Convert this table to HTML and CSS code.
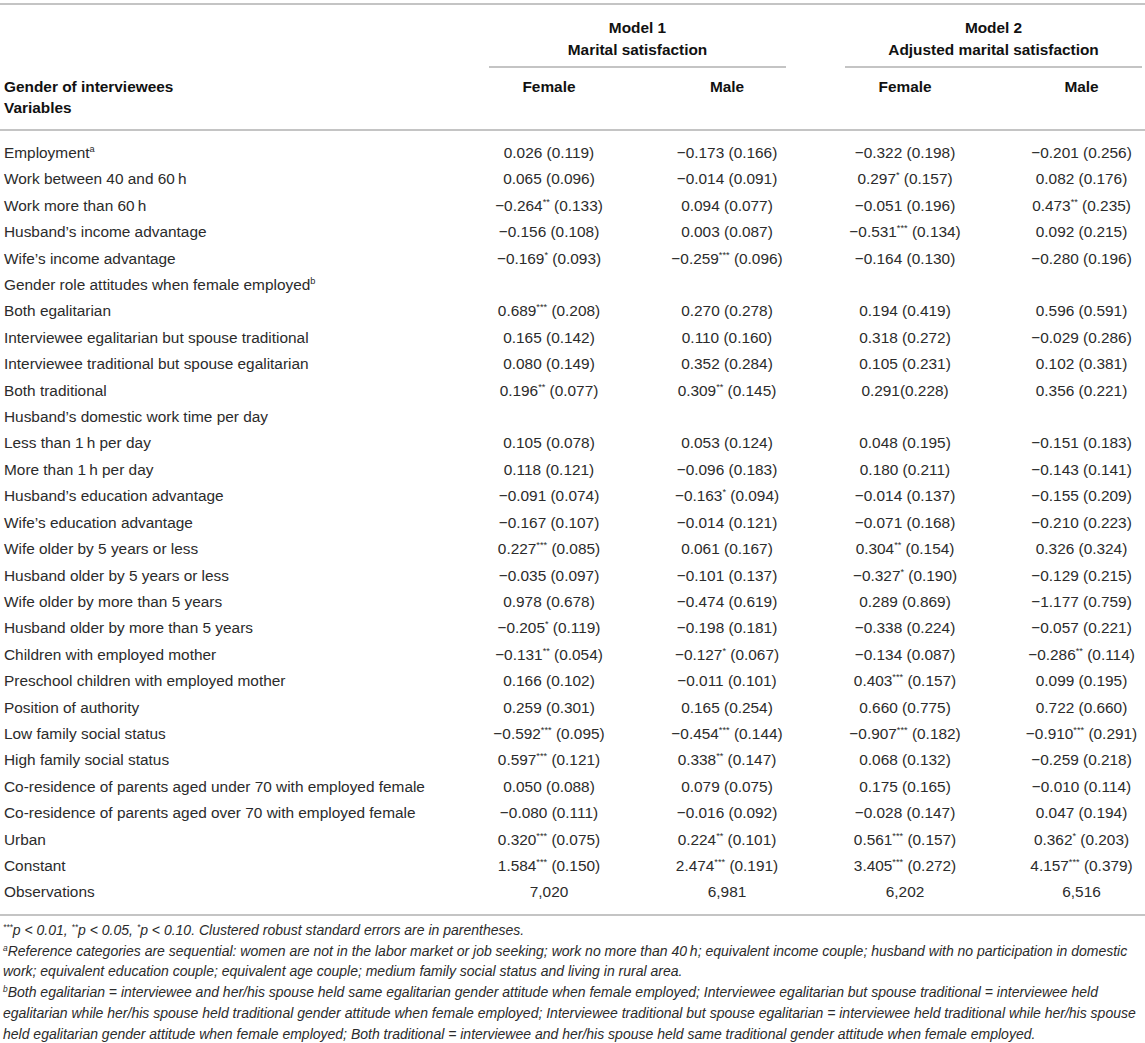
FILE: index.html
```html
<!DOCTYPE html>
<html lang="en">
  <head>
    <meta charset="UTF-8" />
    <meta name="viewport" content="width=device-width, initial-scale=1.0" />
    <title>Marital satisfaction models</title>
    <link rel="stylesheet" href="styles.css">
  </head>
  <body>
    <table class="results">
      <colgroup>
        <col class="col-label" />
        <col class="col-num" />
        <col class="col-num" />
        <col class="col-num" />
        <col class="col-last" />
      </colgroup>
      <thead>
        <tr class="head-models">
          <th></th>
          <th colspan="2"><div class="model model-1">Model 1<br />Marital satisfaction</div></th>
          <th colspan="2"><div class="model model-2">Model 2<br />Adjusted marital satisfaction</div></th>
        </tr>
        <tr class="head-gender">
          <th class="label">Gender of interviewees<br />Variables</th>
          <th>Female</th>
          <th>Male</th>
          <th>Female</th>
          <th class="last">Male</th>
        </tr>
      </thead>
      <tbody>
        <tr><td class="label">Employment<sup>a</sup></td><td>0.026 (0.119)</td><td>&minus;0.173 (0.166)</td><td>&minus;0.322 (0.198)</td><td class="last">&minus;0.201 (0.256)</td></tr>
        <tr><td class="label">Work between 40 and 60&#8201;h</td><td>0.065 (0.096)</td><td>&minus;0.014 (0.091)</td><td>0.297<sup>*</sup> (0.157)</td><td class="last">0.082 (0.176)</td></tr>
        <tr><td class="label">Work more than 60&#8201;h</td><td>&minus;0.264<sup>**</sup> (0.133)</td><td>0.094 (0.077)</td><td>&minus;0.051 (0.196)</td><td class="last">0.473<sup>**</sup> (0.235)</td></tr>
        <tr><td class="label">Husband&rsquo;s income advantage</td><td>&minus;0.156 (0.108)</td><td>0.003 (0.087)</td><td>&minus;0.531<sup>***</sup> (0.134)</td><td class="last">0.092 (0.215)</td></tr>
        <tr><td class="label">Wife&rsquo;s income advantage</td><td>&minus;0.169<sup>*</sup> (0.093)</td><td>&minus;0.259<sup>***</sup> (0.096)</td><td>&minus;0.164 (0.130)</td><td class="last">&minus;0.280 (0.196)</td></tr>
        <tr><td class="label">Gender role attitudes when female employed<sup>b</sup></td><td></td><td></td><td></td><td class="last"></td></tr>
        <tr><td class="label">Both egalitarian</td><td>0.689<sup>***</sup> (0.208)</td><td>0.270 (0.278)</td><td>0.194 (0.419)</td><td class="last">0.596 (0.591)</td></tr>
        <tr><td class="label">Interviewee egalitarian but spouse traditional</td><td>0.165 (0.142)</td><td>0.110 (0.160)</td><td>0.318 (0.272)</td><td class="last">&minus;0.029 (0.286)</td></tr>
        <tr><td class="label">Interviewee traditional but spouse egalitarian</td><td>0.080 (0.149)</td><td>0.352 (0.284)</td><td>0.105 (0.231)</td><td class="last">0.102 (0.381)</td></tr>
        <tr><td class="label">Both traditional</td><td>0.196<sup>**</sup> (0.077)</td><td>0.309<sup>**</sup> (0.145)</td><td>0.291(0.228)</td><td class="last">0.356 (0.221)</td></tr>
        <tr><td class="label">Husband&rsquo;s domestic work time per day</td><td></td><td></td><td></td><td class="last"></td></tr>
        <tr><td class="label">Less than 1&#8201;h per day</td><td>0.105 (0.078)</td><td>0.053 (0.124)</td><td>0.048 (0.195)</td><td class="last">&minus;0.151 (0.183)</td></tr>
        <tr><td class="label">More than 1&#8201;h per day</td><td>0.118 (0.121)</td><td>&minus;0.096 (0.183)</td><td>0.180 (0.211)</td><td class="last">&minus;0.143 (0.141)</td></tr>
        <tr><td class="label">Husband&rsquo;s education advantage</td><td>&minus;0.091 (0.074)</td><td>&minus;0.163<sup>*</sup> (0.094)</td><td>&minus;0.014 (0.137)</td><td class="last">&minus;0.155 (0.209)</td></tr>
        <tr><td class="label">Wife&rsquo;s education advantage</td><td>&minus;0.167 (0.107)</td><td>&minus;0.014 (0.121)</td><td>&minus;0.071 (0.168)</td><td class="last">&minus;0.210 (0.223)</td></tr>
        <tr><td class="label">Wife older by 5 years or less</td><td>0.227<sup>***</sup> (0.085)</td><td>0.061 (0.167)</td><td>0.304<sup>**</sup> (0.154)</td><td class="last">0.326 (0.324)</td></tr>
        <tr><td class="label">Husband older by 5 years or less</td><td>&minus;0.035 (0.097)</td><td>&minus;0.101 (0.137)</td><td>&minus;0.327<sup>*</sup> (0.190)</td><td class="last">&minus;0.129 (0.215)</td></tr>
        <tr><td class="label">Wife older by more than 5 years</td><td>0.978 (0.678)</td><td>&minus;0.474 (0.619)</td><td>0.289 (0.869)</td><td class="last">&minus;1.177 (0.759)</td></tr>
        <tr><td class="label">Husband older by more than 5 years</td><td>&minus;0.205<sup>*</sup> (0.119)</td><td>&minus;0.198 (0.181)</td><td>&minus;0.338 (0.224)</td><td class="last">&minus;0.057 (0.221)</td></tr>
        <tr><td class="label">Children with employed mother</td><td>&minus;0.131<sup>**</sup> (0.054)</td><td>&minus;0.127<sup>*</sup> (0.067)</td><td>&minus;0.134 (0.087)</td><td class="last">&minus;0.286<sup>**</sup> (0.114)</td></tr>
        <tr><td class="label">Preschool children with employed mother</td><td>0.166 (0.102)</td><td>&minus;0.011 (0.101)</td><td>0.403<sup>***</sup> (0.157)</td><td class="last">0.099 (0.195)</td></tr>
        <tr><td class="label">Position of authority</td><td>0.259 (0.301)</td><td>0.165 (0.254)</td><td>0.660 (0.775)</td><td class="last">0.722 (0.660)</td></tr>
        <tr><td class="label">Low family social status</td><td>&minus;0.592<sup>***</sup> (0.095)</td><td>&minus;0.454<sup>***</sup> (0.144)</td><td>&minus;0.907<sup>***</sup> (0.182)</td><td class="last">&minus;0.910<sup>***</sup> (0.291)</td></tr>
        <tr><td class="label">High family social status</td><td>0.597<sup>***</sup> (0.121)</td><td>0.338<sup>**</sup> (0.147)</td><td>0.068 (0.132)</td><td class="last">&minus;0.259 (0.218)</td></tr>
        <tr><td class="label">Co-residence of parents aged under 70 with employed female</td><td>0.050 (0.088)</td><td>0.079 (0.075)</td><td>0.175 (0.165)</td><td class="last">&minus;0.010 (0.114)</td></tr>
        <tr><td class="label">Co-residence of parents aged over 70 with employed female</td><td>&minus;0.080 (0.111)</td><td>&minus;0.016 (0.092)</td><td>&minus;0.028 (0.147)</td><td class="last">0.047 (0.194)</td></tr>
        <tr><td class="label">Urban</td><td>0.320<sup>***</sup> (0.075)</td><td>0.224<sup>**</sup> (0.101)</td><td>0.561<sup>***</sup> (0.157)</td><td class="last">0.362<sup>*</sup> (0.203)</td></tr>
        <tr><td class="label">Constant</td><td>1.584<sup>***</sup> (0.150)</td><td>2.474<sup>***</sup> (0.191)</td><td>3.405<sup>***</sup> (0.272)</td><td class="last">4.157<sup>***</sup> (0.379)</td></tr>
        <tr><td class="label">Observations</td><td>7,020</td><td>6,981</td><td>6,202</td><td class="last">6,516</td></tr>
      </tbody>
    </table>

    <div class="notes">
      <p><sup>***</sup>p &lt; 0.01, <sup>**</sup>p &lt; 0.05, <sup>*</sup>p &lt; 0.10. Clustered robust standard errors are in parentheses.</p>
      <p><sup>a</sup>Reference categories are sequential: women are not in the labor market or job seeking; work no more than 40&#8201;h; equivalent income couple; husband with no participation in domestic work; equivalent education couple; equivalent age couple; medium family social status and living in rural area.</p>
      <p><sup>b</sup>Both egalitarian = interviewee and her/his spouse held same egalitarian gender attitude when female employed; Interviewee egalitarian but spouse traditional = interviewee held egalitarian while her/his spouse held traditional gender attitude when female employed; Interviewee traditional but spouse egalitarian = interviewee held traditional while her/his spouse held egalitarian gender attitude when female employed; Both traditional = interviewee and her/his spouse held same traditional gender attitude when female employed.</p>
    </div>
  </body>
</html>
```

FILE: styles.css
```css
body {
  margin: 0;
  padding: 0;
  font-family: "Liberation Sans", Arial, sans-serif;
  color: #2b2b2b;
  background-color: #fff;
}

.results {
  width: 1145px;
  margin-top: 3px;
  border-collapse: separate;
  border-spacing: 0;
  table-layout: fixed;
  font-size: 15.4px;
}

.col-label {
  width: 460px;
}

.col-num {
  width: 178px;
}

.col-last {
  width: 151px;
}

th,
td {
  padding: 0;
  text-align: center;
  white-space: nowrap;
}

th {
  font-weight: bold;
  color: #111;
}

.label {
  text-align: left;
  padding-left: 4px;
}

.last {
  padding-left: 24px;
}

.head-models th {
  border-top: 2px solid #c4c4c4;
  padding-top: 12px;
  line-height: 22px;
  vertical-align: top;
}

.model {
  padding-bottom: 5px;
  border-bottom: 2px solid #c4c4c4;
}

.model-1 {
  margin: 0 30px 0 29px;
}

.model-2 {
  margin: 0 3px 0 29px;
}

.head-gender th {
  padding-top: 8px;
  padding-bottom: 11px;
  line-height: 21px;
  vertical-align: top;
  border-bottom: 2px solid #c4c4c4;
}

.head-gender th.last {
  padding-left: 24px;
}

tbody td {
  line-height: 26.4px;
}

tbody tr:first-child td {
  padding-top: 9px;
}

tbody tr:last-child td {
  padding-bottom: 8px;
  border-bottom: 2px solid #c4c4c4;
}

sup {
  font-size: 0.6em;
  line-height: 0;
  vertical-align: 0.6em;
}

.notes {
  padding: 4px 0 0 3px;
  font-size: 14px;
  font-style: italic;
  line-height: 20.8px;
  color: #2b2b2b;
}

.notes p {
  margin: 0;
}
```
